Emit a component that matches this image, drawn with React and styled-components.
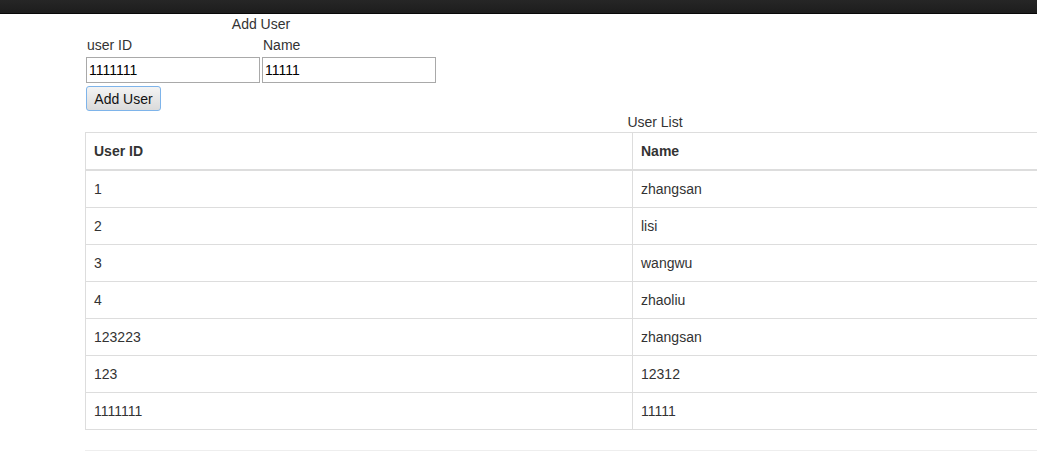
import React, { useState } from "react";
import styled, { createGlobalStyle } from "styled-components";

const GlobalStyle = createGlobalStyle`
  html, body {
    margin: 0;
    padding: 0;
    background: #fff;
    overflow: hidden;
  }
  body {
    font-family: "Liberation Sans", Arial, Helvetica, sans-serif;
    font-size: 14px;
    line-height: 20px;
    color: #333;
  }
`;

const Viewport = styled.div`
  width: 100%;
  overflow: hidden;
`;

const TopBar = styled.div`
  height: 14px;
  background: linear-gradient(#262626, #1d1d1d);
  border-bottom: 1px solid #080808;
  box-sizing: border-box;
`;

// the bootstrap container is wider than the window, so the table gets cut at the right
const Page = styled.div`
  padding-left: 85px;
  width: 1140px;
`;

const FormSection = styled.div`
  width: 350px;
  margin-left: 1px;
`;

const Title = styled.div`
  text-align: center;
  line-height: 20px;
`;

const Fields = styled.div`
  display: flex;
  gap: 2px;
  margin-top: 1px;
`;

const Field = styled.div`
  display: flex;
  flex-direction: column;
`;

const Label = styled.label`
  line-height: 20px;
  margin-left: 1px;
  margin-bottom: 2px;
`;

const Input = styled.input`
  width: 174px;
  height: 26px;
  box-sizing: border-box;
  border: 1px solid #a9a9a9;
  padding: 1px 2px;
  font-family: "Liberation Sans", Arial, sans-serif;
  font-size: 14px;
  color: #000;
  outline: none;
`;

const Button = styled.button`
  margin-top: 3px;
  width: 75px;
  height: 25px;
  box-sizing: border-box;
  border: 1px solid #7eb4ea;
  border-radius: 3px;
  background: linear-gradient(#f4f4f4, #dadada);
  font-family: "Liberation Sans", Arial, sans-serif;
  font-size: 14px;
  color: #111;
  padding: 0;
`;

const ListTitle = styled.div`
  text-align: center;
  line-height: 20px;
  margin-top: 1px;
`;

const Table = styled.table`
  width: 1140px;
  border-collapse: collapse;
  border-spacing: 0;
  border: 1px solid #ddd;
  table-layout: fixed;
`;

const Th = styled.th`
  text-align: left;
  font-weight: bold;
  padding: 8px;
  line-height: 20px;
  border: 1px solid #ddd;
  border-bottom: 2px solid #ddd;
`;

const Td = styled.td`
  padding: 8px;
  line-height: 20px;
  border: 1px solid #ddd;
`;

const Rule = styled.hr`
  margin: 20px 0;
  border: 0;
  border-top: 1px solid #eee;
`;

const initialUsers = [
  { id: "1", name: "zhangsan" },
  { id: "2", name: "lisi" },
  { id: "3", name: "wangwu" },
  { id: "4", name: "zhaoliu" },
  { id: "123223", name: "zhangsan" },
  { id: "123", name: "12312" },
  { id: "1111111", name: "11111" },
];

export default function App() {
  const [users, setUsers] = useState(initialUsers);
  const [userId, setUserId] = useState("1111111");
  const [name, setName] = useState("11111");

  const addUser = () => {
    if (!userId) return;
    setUsers(prev => [...prev, { id: userId, name }]);
  };

  return (
    <Viewport>
      <GlobalStyle />
      <TopBar />
      <Page>
        <FormSection>
          <Title>Add User</Title>
          <Fields>
            <Field>
              <Label>user ID</Label>
              <Input value={userId} onChange={e => setUserId(e.target.value)} />
            </Field>
            <Field>
              <Label>Name</Label>
              <Input value={name} onChange={e => setName(e.target.value)} />
            </Field>
          </Fields>
          <Button onClick={addUser}>Add User</Button>
        </FormSection>
        <ListTitle>User List</ListTitle>
        <Table>
          <colgroup>
            <col style={{ width: 547 }} />
            <col />
          </colgroup>
          <thead>
            <tr>
              <Th>User ID</Th>
              <Th>Name</Th>
            </tr>
          </thead>
          <tbody>
            {users.map((u, i) => (
              <tr key={i}>
                <Td>{u.id}</Td>
                <Td>{u.name}</Td>
              </tr>
            ))}
          </tbody>
        </Table>
        <Rule />
      </Page>
    </Viewport>
  );
}
